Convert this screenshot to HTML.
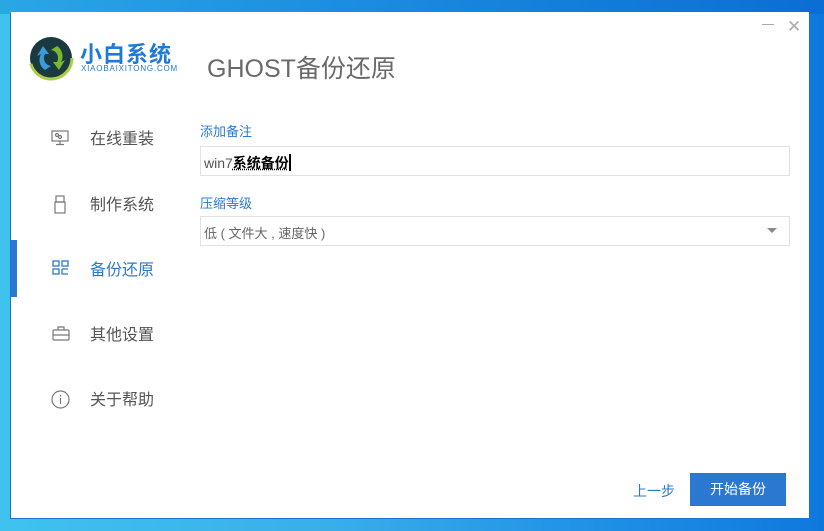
<!DOCTYPE html>
<html><head><meta charset="utf-8"><style>
*{margin:0;padding:0;box-sizing:border-box}
body{width:824px;height:531px;overflow:hidden;position:relative;font-family:"Liberation Sans","Noto Sans CJK SC",sans-serif;background:linear-gradient(90deg,#3fc3ee 0%,#3aaee9 40%,#1e8ee5 75%,#0f78dd 100%)}
.top{position:absolute;left:0;top:0;width:824px;height:14px;background:linear-gradient(90deg,#2aa6e6,#1683dc 60%,#0c6dd5)}
.win{position:absolute;left:11px;top:12px;width:798px;height:506px;background:#fff;box-shadow:-1px 1px 0 #1a73d0}
.a{position:absolute;white-space:nowrap}
.nav{font-size:16px;color:#555;left:79px}
.ic{position:absolute;left:40px}
.lbl{font-size:13px;color:#2a7bd3;left:189px}
.box{position:absolute;left:189px;width:590px;height:30px;border:1px solid #e2e2e2;font-size:14px;color:#555;padding:6px 3px}
</style></head><body>
<div class="top"></div>
<div class="win">
  <svg class="a" style="left:16px;top:22px" width="48" height="48" viewBox="0 0 48 48">
    <circle cx="24" cy="24" r="21" fill="#1b3a3f"/>
    <circle cx="24" cy="24" r="21" fill="none" stroke="#a9cf4a" stroke-width="3" stroke-dasharray="60 80"/>
    <path d="M30 12 A12 12 0 0 1 34 28 L38 26 L32 36 L26 28 L30 28 A8 8 0 0 0 24 16Z" fill="#7ab830"/>
    <path d="M18 36 A12 12 0 0 1 14 20 L10 22 L16 12 L22 20 L18 20 A8 8 0 0 0 24 32Z" fill="#3a9bd8"/>
  </svg>
  <div class="a" style="left:69px;top:25px;font-size:22px;font-weight:bold;color:#1f7ad6;letter-spacing:1px">小白系统</div>
  <div class="a" style="left:70px;top:52px;font-size:8px;color:#1f7ad6;letter-spacing:0.8px">XIAOBAIXITONG.COM</div>
  <div class="a" style="left:196px;top:37px;font-size:25px;color:#6a6a6a">GHOST备份还原</div>
  <div class="a" style="left:751px;top:12px;width:12px;height:1px;background:#aaa"></div>
  <div class="a" style="left:776px;top:8px;font-size:17px;line-height:14px;color:#aaa">✕</div>

  <div class="a" style="left:0;top:228px;width:6px;height:57px;background:#2a78d0"></div>
  <svg class="ic" style="top:118px" width="18" height="16" viewBox="0 0 18 16" fill="none" stroke="#777" stroke-width="1.2"><rect x="1" y="1" width="16" height="10"/><path d="M9 11v3M5 14.5h8"/><circle cx="6" cy="5" r="1.5"/><circle cx="9" cy="7" r="1.5"/></svg>
  <div class="a nav" style="top:113px">在线重装</div>
  <svg class="ic" style="top:183px;left:43px" width="12" height="20" viewBox="0 0 12 20" fill="none" stroke="#777" stroke-width="1.2"><rect x="2" y="1" width="8" height="6"/><rect x="1" y="7" width="10" height="11"/></svg>
  <div class="a nav" style="top:179px">制作系统</div>
  <svg class="ic" style="top:248px;left:41px" width="18" height="16" viewBox="0 0 18 16" fill="none" stroke="#2a78d0" stroke-width="1.3"><rect x="1" y="1" width="6" height="5"/><rect x="10" y="1" width="6" height="5"/><rect x="1" y="9" width="6" height="5"/><path d="M10 9h6M10 9v5h6"/></svg>
  <div class="a nav" style="top:244px;color:#2a78d0">备份还原</div>
  <svg class="ic" style="top:314px;left:41px" width="18" height="15" viewBox="0 0 18 15" fill="none" stroke="#777" stroke-width="1.2"><rect x="1" y="4" width="16" height="10" rx="1"/><path d="M6 4V1h6v3M1 9h16"/></svg>
  <div class="a nav" style="top:309px">其他设置</div>
  <svg class="ic" style="top:378px;left:40px" width="19" height="19" viewBox="0 0 19 19" fill="none" stroke="#777" stroke-width="1.2"><circle cx="9.5" cy="9.5" r="8.5"/><path d="M9.5 8v6M9.5 5v1.5"/></svg>
  <div class="a nav" style="top:374px">关于帮助</div>

  <div class="a lbl" style="top:109px">添加备注</div>
  <div class="box" style="top:134px">win7<b style="color:#000;text-decoration:underline dotted">系统备份</b><span style="display:inline-block;width:2px;height:17px;background:#000;vertical-align:-3px"></span></div>
  <div class="a lbl" style="top:181px">压缩等级</div>
  <div class="box" style="top:204px;font-size:13px;color:#666">低 ( 文件大 , 速度快 )<span style="position:absolute;right:12px;top:11px;border:5px solid transparent;border-top:5px solid #888"></span></div>

  <div class="a" style="left:622px;top:469px;font-size:14px;color:#2a78d0">上一步</div>
  <div class="a" style="left:679px;top:461px;width:96px;height:33px;background:#2a78d0;color:#fff;font-size:14px;text-align:center;line-height:33px">开始备份</div>
</div>
</body></html>
